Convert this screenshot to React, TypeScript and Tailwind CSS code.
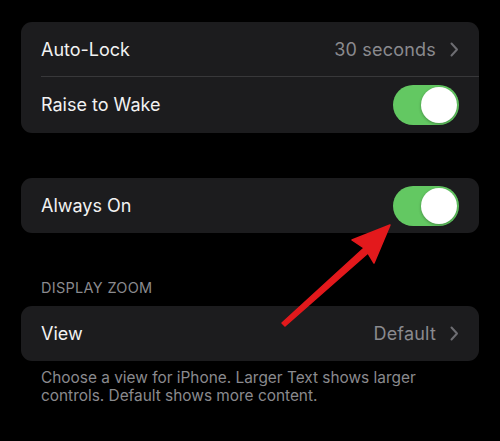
import React from "react";

const Chevron = () => (
  <svg width="9" height="15" viewBox="0 0 9 15" className="ml-[14px]">
    <path d="M1.5 1.5 L7 7.5 L1.5 13.5" fill="none" stroke="#6d6d72" strokeWidth="2" strokeLinecap="round" strokeLinejoin="round" />
  </svg>
);

const Toggle = () => (
  <div className="w-[66px] h-[40px] rounded-full bg-[#63c862] flex items-center justify-end pr-[2px]">
    <div className="w-[36px] h-[36px] rounded-full bg-white shadow-[0_1px_3px_rgba(0,0,0,0.3)]" />
  </div>
);

const Row: React.FC<{ label: string; value?: string; toggle?: boolean; divider?: boolean }> = ({
  label,
  value,
  toggle,
  divider,
}) => (
  <div className="pl-[20px]">
    <div className={`h-[55px] flex items-center justify-between pr-[20px] ${divider ? "border-b border-[#38383a]" : ""}`}>
      <span className="text-[18px] text-[#f2f2f2]">{label}</span>
      {toggle ? (
        <Toggle />
      ) : (
        <div className="flex items-center">
          <span className="text-[18px] text-[#8a8a8e] tracking-[0.2px]">{value}</span>
          <Chevron />
        </div>
      )}
    </div>
  </div>
);

export default function App() {
  return (
    <div
      className="relative w-[500px] h-[441px] bg-black px-[21px] pt-[22px] overflow-hidden"
      style={{ fontFamily: "Inter, 'Noto Sans', sans-serif" }}
    >
      <div className="rounded-[11px] bg-[#1c1c1e] h-[111px]">
        <Row label="Auto-Lock" value="30 seconds" divider />
        <Row label="Raise to Wake" toggle />
      </div>

      <div className="mt-[45px] rounded-[11px] bg-[#1c1c1e]">
        <Row label="Always On" toggle />
      </div>

      <div className="mt-[46px] pl-[20px] text-[14.5px] tracking-[0.3px] text-[#8a8a8e] leading-[18px]">DISPLAY ZOOM</div>

      <div className="mt-[9px] rounded-[11px] bg-[#1c1c1e]">
        <Row label="View" value="Default" />
      </div>

      <p className="mt-[8px] pl-[20px] pr-[20px] text-[15.4px] leading-[18px] text-[#8a8a8e]">
        Choose a view for iPhone. Larger Text shows larger controls. Default shows more content.
      </p>

      <svg className="absolute left-0 top-0 pointer-events-none" width="500" height="441" viewBox="0 0 500 441">
        <path
          d="M390 225 L352 240 L364 248 L282 323 L285 326 L368 253 L374 263 Z"
          fill="#e3191c"
          stroke="#e3191c"
          strokeWidth="1.5"
          strokeLinejoin="round"
        />
      </svg>
    </div>
  );
}
